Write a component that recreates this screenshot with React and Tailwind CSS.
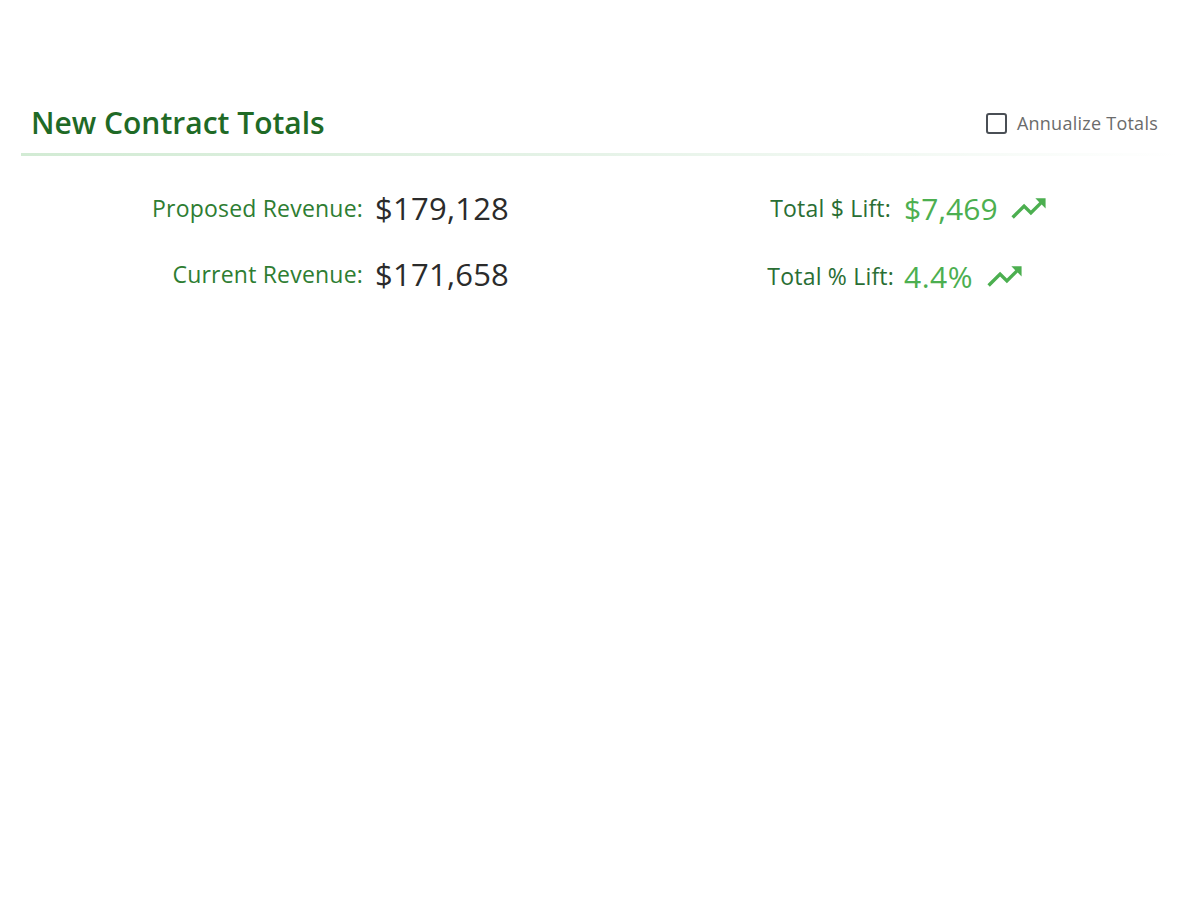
import React from "react";

function TrendUp({ className }) {
  return (
    <svg viewBox="0 0 24 24" className={className} fill="currentColor">
      <path d="M16 6l2.29 2.29-4.88 4.88-4-4L2 16.59 3.41 18l6-6 4 4 6.3-6.29L22 12V6z" />
    </svg>
  );
}

export default function App() {
  return (
    <div className="min-h-[900px] w-[1200px] bg-white" style={{ fontFamily: '"Open Sans", sans-serif' }}>
      <div className="pt-[100px] mx-[21px]">
        <div className="flex items-center justify-between pl-[10px] pr-[21px] h-[46px]">
          <h1 className="text-[30px] font-semibold text-[#1f6a26] leading-none">New Contract Totals</h1>
          <label className="flex items-center gap-[10px] text-[18px] tracking-[0.25px] text-[#6b6b6b]">
            <span className="w-[21px] h-[21px] border-2 border-[#4a4f55] rounded-[3px] inline-block" />
            Annualize Totals
          </label>
        </div>
        <div className="h-[3px] mt-[7px] bg-gradient-to-r from-[#d2ebd4] via-[#e6f3e8] to-transparent" />
        <div className="grid grid-cols-2 mt-[30px]">
          <div className="flex flex-col gap-[22px]">
            <div className="flex items-center gap-[12px] h-[44px]">
              <span className="w-[342px] text-right text-[23px] tracking-[0.2px] text-[#2e7d32]">Proposed Revenue:</span>
              <span className="text-[31px] tracking-[0.25px] text-[#2b2b2b]">$179,128</span>
            </div>
            <div className="flex items-center gap-[12px] h-[44px]">
              <span className="w-[342px] text-right text-[23px] tracking-[0.2px] text-[#2e7d32]">Current Revenue:</span>
              <span className="text-[31px] tracking-[0.25px] text-[#2b2b2b]">$171,658</span>
            </div>
          </div>
          <div className="flex flex-col gap-[22px]">
            <div className="flex items-center h-[44px]">
              <span className="w-[291px] text-right text-[23px] tracking-[0.2px] text-[#2a6e34]">Total $ Lift:</span>
              <span className="ml-[13px] text-[30px] text-[#4caf50]">$7,469</span>
              <TrendUp className="ml-[10px] w-[41px] h-[41px] text-[#4caf50]" />
            </div>
            <div className="flex items-center h-[44px] mt-[2px]">
              <span className="w-[294px] text-right text-[23px] tracking-[0.2px] text-[#2a6e34]">Total % Lift:</span>
              <span className="ml-[10px] text-[30px] tracking-[0.5px] text-[#4caf50]">4.4%</span>
              <TrendUp className="ml-[11px] w-[41px] h-[41px] text-[#4caf50]" />
            </div>
          </div>
        </div>
      </div>
    </div>
  );
}
